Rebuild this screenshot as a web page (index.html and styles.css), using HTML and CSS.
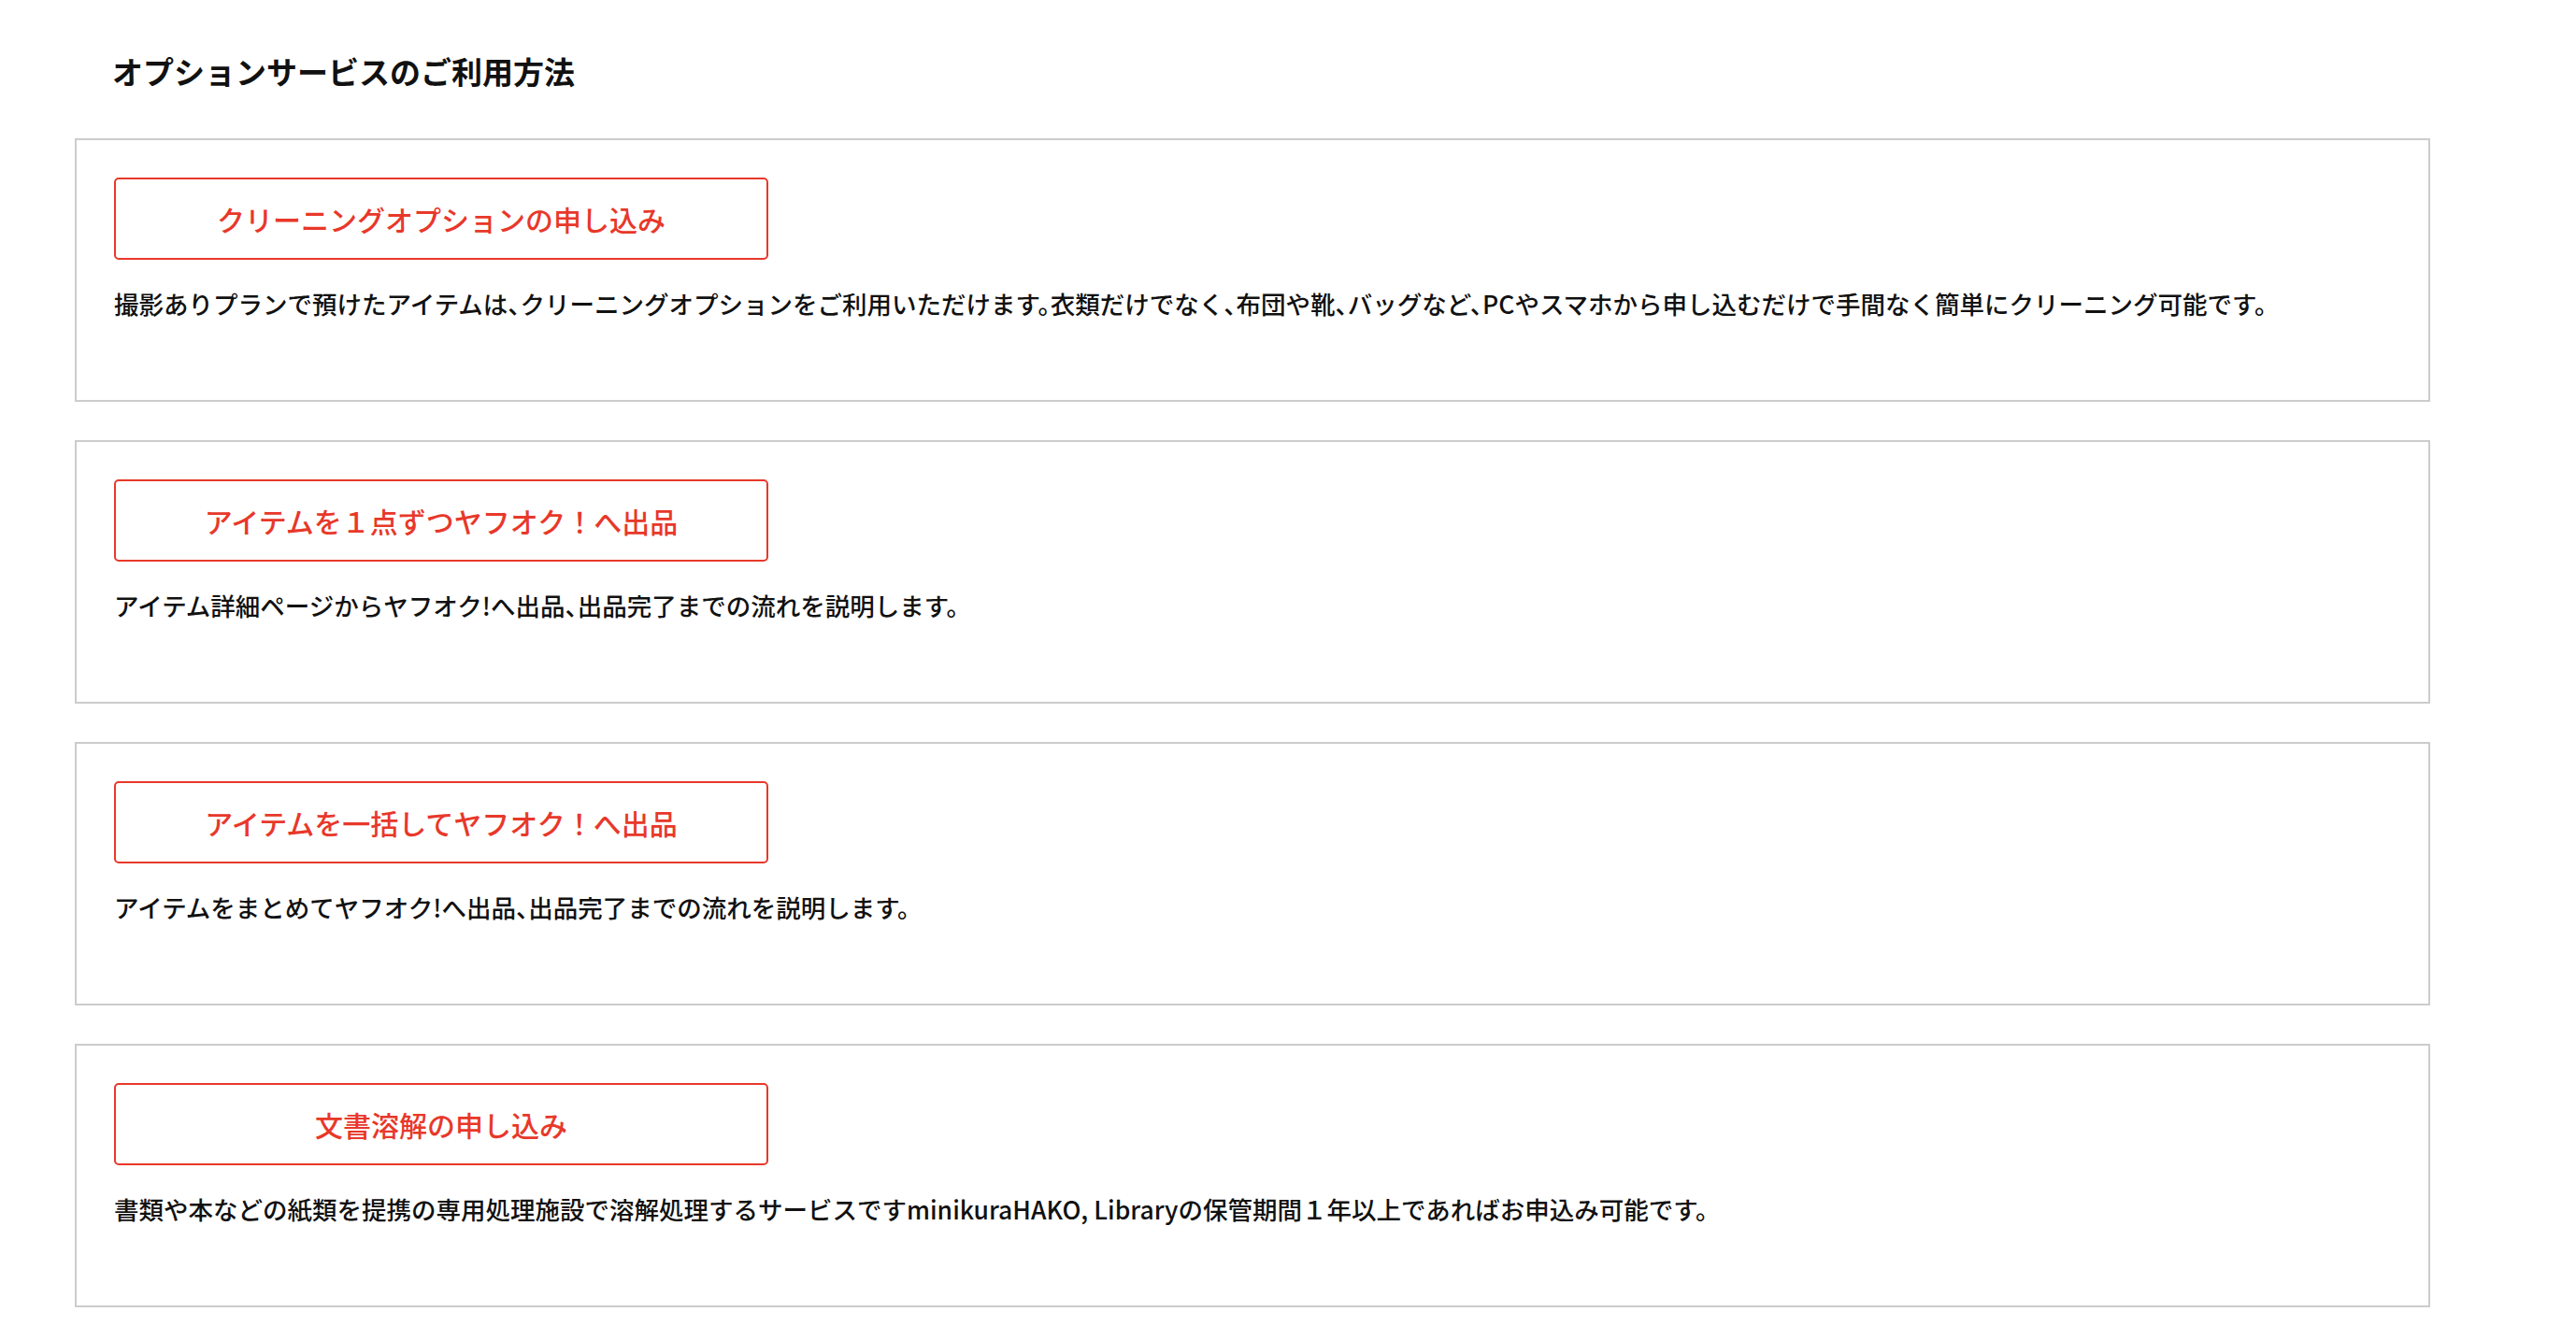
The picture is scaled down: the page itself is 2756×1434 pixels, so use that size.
FILE: index.html
```html
<!DOCTYPE html>
<html lang="ja">
<head>
    <meta charset="UTF-8">
    <meta name="viewport" content="width=device-width, initial-scale=1.0">
    <title>オプションサービスのご利用方法</title>
    <link rel="stylesheet" href="styles.css">
</head>
<body>
    <div class="page">
        <h1 class="page-title">オプションサービスのご利用方法</h1>

        <div class="option-list">
            <section class="option-card">
                <a href="#" class="option-button">クリーニングオプションの申し込み</a>
                <p class="option-text">撮影ありプランで預けたアイテムは、クリーニングオプションをご利用いただけます。衣類だけでなく、布団や靴、バッグなど、PCやスマホから申し込むだけで手間なく簡単にクリーニング可能です。</p>
            </section>

            <section class="option-card">
                <a href="#" class="option-button">アイテムを１点ずつヤフオク！へ出品</a>
                <p class="option-text">アイテム詳細ページからヤフオク!へ出品、出品完了までの流れを説明します。</p>
            </section>

            <section class="option-card">
                <a href="#" class="option-button">アイテムを一括してヤフオク！へ出品</a>
                <p class="option-text">アイテムをまとめてヤフオク!へ出品、出品完了までの流れを説明します。</p>
            </section>

            <section class="option-card">
                <a href="#" class="option-button">文書溶解の申し込み</a>
                <p class="option-text">書類や本などの紙類を提携の専用処理施設で溶解処理するサービスですminikuraHAKO, Libraryの保管期間１年以上であればお申込み可能です。</p>
            </section>
        </div>
    </div>
</body>
</html>
```

FILE: styles.css
```css
body {
    margin: 0;
    font-family: "Noto Sans CJK JP", "Noto Sans", sans-serif;
    color: #111;
    background: #fff;
}
.page {
    padding: 0 80px;
}
.page-title {
    margin: 0;
    padding: 51px 0 47px 40px;
    font-size: 33px;
    line-height: 50px;
    font-weight: 700;
}
.option-list {
    width: 2520px;
}
.option-card {
    box-sizing: border-box;
    height: 282px;
    margin-bottom: 41px;
    padding: 40px;
    border: 2px solid #cccccc;
}
.option-button {
    display: flex;
    justify-content: center;
    align-items: center;
    box-sizing: border-box;
    width: 700px;
    height: 88px;
    border: 2px solid #e8382a;
    border-radius: 5px;
    color: #e8382a;
    font-size: 30px;
    font-weight: 500;
    text-decoration: none;
}
/* 句読点は半角幅で詰める */
.option-text {
    margin: 27px 0 0;
    font-size: 26.5px;
    line-height: 40px;
    font-weight: 500;
    font-feature-settings: "halt";
}
```
